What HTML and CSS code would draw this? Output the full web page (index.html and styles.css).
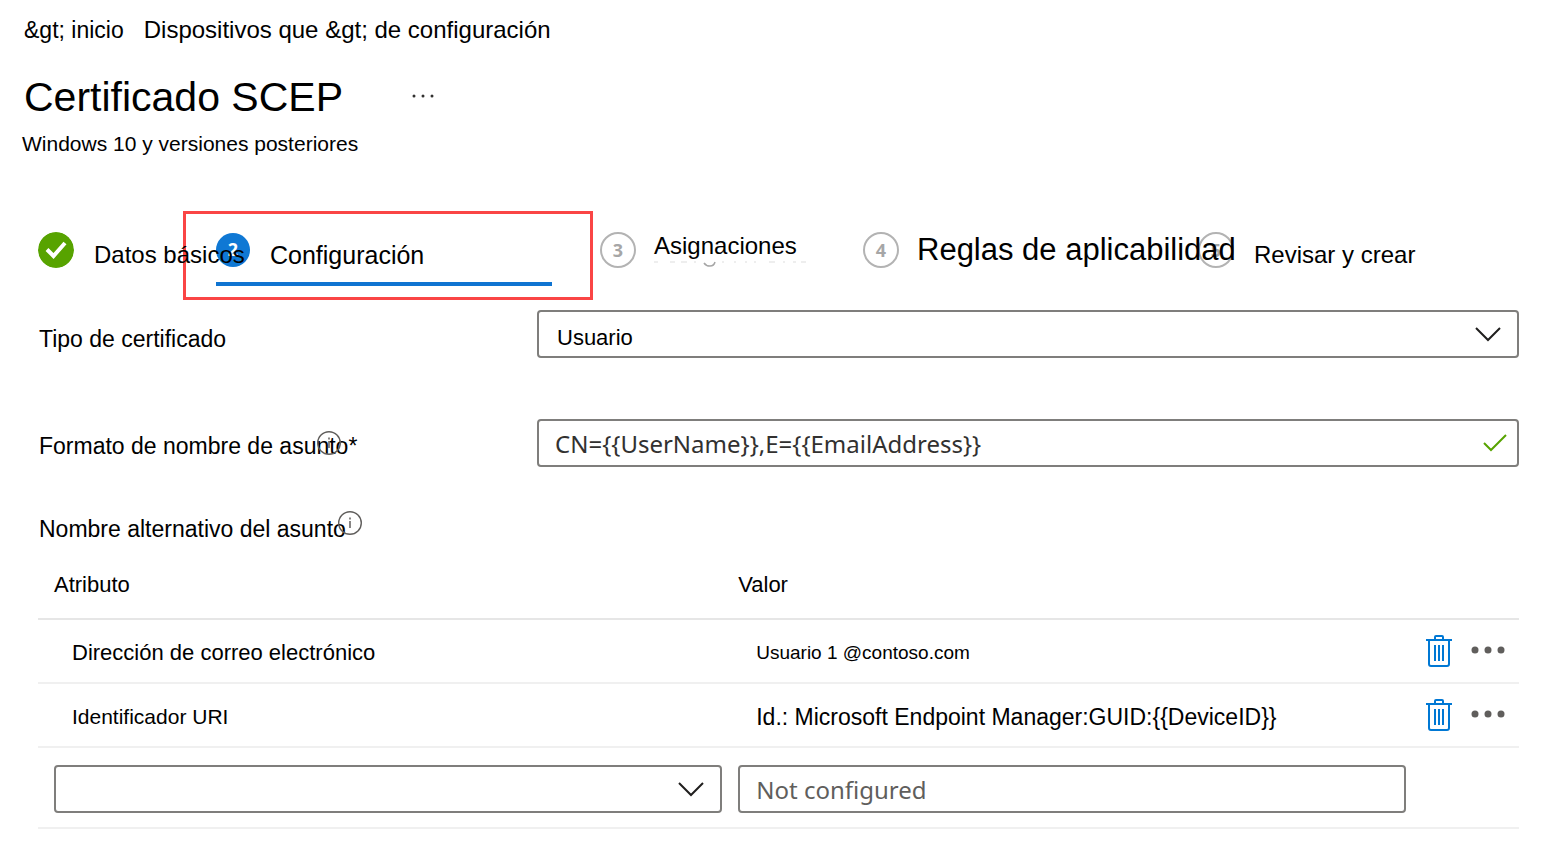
FILE: index.html
```html
<!DOCTYPE html>
<html lang="es">
<head>
<meta charset="utf-8">
<title>Certificado SCEP</title>
<link rel="stylesheet" href="styles.css">
</head>
<body>
<header class="page-header">
  <nav class="breadcrumb" aria-label="Ruta">
    <a class="crumb crumb-home" href="#">&amp;gt; inicio</a>
    <a class="crumb" href="#">Dispositivos que &amp;gt; de configuración</a>
  </nav>
  <div class="title-row">
    <h1 class="title">Certificado SCEP</h1>
    <button class="icon-button more-button" type="button" aria-label="Más opciones">
      <svg width="24" height="6" viewBox="0 0 24 6" fill="#323130"><circle cx="3" cy="3" r="1.5"/><circle cx="12" cy="3" r="1.5"/><circle cx="21" cy="3" r="1.5"/></svg>
    </button>
  </div>
  <p class="subtitle">Windows 10 y versiones posteriores</p>
</header>

<main class="content">
  <ol class="steps">
    <li class="step">
      <svg class="badge" viewBox="0 0 36 36"><circle cx="18" cy="18" r="18" fill="#57a300"/><path d="M9 17.500l6.500 6.500L27 11" fill="none" stroke="#fff" stroke-width="4"/></svg>
      <span class="step-label label-low">Datos básicos</span>
    </li>
    <li class="step step-active" aria-current="step">
      <div class="step-tab">
        <span class="badge badge-current">2</span>
        <span class="step-label label-low label-large">Configuración</span>
      </div>
    </li>
    <li class="step">
      <span class="badge badge-pending">3</span>
      <span class="step-label label-high">Asignaciones
        <svg class="tail" viewBox="0 0 154 8" fill="none" stroke="#a6a6a6"><path d="M50 2Q52 5 56 5Q60 5 61 1" stroke-width="1.500"/><path d="M0 1h4M16 1h5M27 1h6M40 1h2M68 1h2M80 1h2M91 1h2M100 1h2M115 1h6M129 1h2M139 1h3M147 1h5" stroke="#ddd"/></svg>
      </span>
    </li>
    <li class="step">
      <span class="badge badge-pending">4</span>
      <span class="step-label label-rules">Reglas de aplicabilidad</span>
    </li>
    <li class="step">
      <span class="badge badge-pending">5</span>
      <span class="step-label label-low">Revisar y crear</span>
    </li>
  </ol>

  <form class="form">
    <div class="field">
      <label class="field-label field-label-low" for="type">Tipo de certificado</label>
      <div class="control">
        <select class="box" id="type"><option>Usuario</option></select>
        <svg class="chevron" viewBox="0 0 26 15"><path d="M1 1l12 12L25 1" fill="none" stroke="#201f1e" stroke-width="2"/></svg>
      </div>
    </div>
    <div class="field">
      <div class="field-label">
        <label for="subject">Formato de nombre de asunto*</label>
        <svg class="info info-subject" viewBox="0 0 24 24"><circle cx="12" cy="12" r="11.300" fill="none" stroke="#605e5c" stroke-width="1.400"/><path d="M12 10v7M12 6.500v2" stroke="#605e5c" stroke-width="1.500"/></svg>
      </div>
      <div class="control">
        <input class="box box-latin" id="subject" type="text" value="CN={{UserName}},E={{EmailAddress}}">
        <svg class="tick" viewBox="0 0 24 18"><path d="M1 9l7 7L23 1" fill="none" stroke="#57a300" stroke-width="2"/></svg>
      </div>
    </div>

    <h2 class="section-title">Nombre alternativo del asunto<svg class="info info-section" viewBox="0 0 24 24"><circle cx="12" cy="12" r="11.300" fill="none" stroke="#605e5c" stroke-width="1.400"/><path d="M12 10v7M12 6.500v2" stroke="#605e5c" stroke-width="1.500"/></svg></h2>

    <table class="san">
      <thead>
        <tr><th class="col-wide" scope="col">Atributo</th><th class="col-wide" scope="col">Valor</th><td></td></tr>
      </thead>
      <tbody>
        <tr class="san-row">
          <td>Dirección de correo electrónico</td>
          <td class="value-small">Usuario 1 @contoso.com</td>
          <td class="actions-cell"><div class="actions">
            <button class="icon-button" type="button" aria-label="Eliminar"><svg width="26" height="32" viewBox="0 0 26 32" fill="none" stroke="#0078d4" stroke-width="2"><path d="M0 5h26M9 5V2q0-1 1-1h6q1 0 1 1v3M3 5v24q0 2 2 2h16q2 0 2-2V5M9 10v16M13 10v16M17 10v16"/></svg></button>
            <button class="icon-button more-button" type="button" aria-label="Más opciones"><svg width="34" height="8" viewBox="0 0 34 8" fill="#605e5c"><circle cx="4" cy="4" r="3.500"/><circle cx="17" cy="4" r="3.500"/><circle cx="30" cy="4" r="3.500"/></svg></button>
          </div></td>
        </tr>
        <tr class="san-row">
          <td class="attribute-small">Identificador URI</td>
          <td class="value-large">Id.: Microsoft Endpoint Manager:GUID:{{DeviceID}}</td>
          <td class="actions-cell"><div class="actions">
            <button class="icon-button" type="button" aria-label="Eliminar"><svg width="26" height="32" viewBox="0 0 26 32" fill="none" stroke="#0078d4" stroke-width="2"><path d="M0 5h26M9 5V2q0-1 1-1h6q1 0 1 1v3M3 5v24q0 2 2 2h16q2 0 2-2V5M9 10v16M13 10v16M17 10v16"/></svg></button>
            <button class="icon-button more-button" type="button" aria-label="Más opciones"><svg width="34" height="8" viewBox="0 0 34 8" fill="#605e5c"><circle cx="4" cy="4" r="3.500"/><circle cx="17" cy="4" r="3.500"/><circle cx="30" cy="4" r="3.500"/></svg></button>
          </div></td>
        </tr>
        <tr class="new-row">
          <td><div class="control">
            <select class="box" aria-label="Atributo"><option></option></select>
            <svg class="chevron" viewBox="0 0 26 15"><path d="M1 1l12 12L25 1" fill="none" stroke="#201f1e" stroke-width="2"/></svg>
          </div></td>
          <td><input class="box box-latin" type="text" aria-label="Valor" placeholder="Not configured"></td>
          <td></td>
        </tr>
      </tbody>
    </table>
  </form>
</main>
</body>
</html>
```
FILE: styles.css
```css
* {
  box-sizing: border-box;
}

body {
  margin: 0;
  background: #fff;
  color: #000;
  font-family: "Liberation Sans", Arial, sans-serif;
  font-size: 22px;
  line-height: 28px;
}

.page-header {
  padding: 15px 24px 0;
}

.breadcrumb {
  display: flex;
  gap: 20px;
  font-size: 24px;
  line-height: 30px;
}

.crumb {
  color: inherit;
  text-decoration: none;
}

.crumb-home {
  font-size: 23px;
}

.title-row {
  display: flex;
  align-items: center;
  gap: 68px;
  margin-top: 27px;
}

.title {
  margin: 0;
  font-size: 41px;
  font-weight: 400;
  line-height: 50px;
}

.subtitle {
  margin: 8px 0 0 -2px;
  font-size: 21px;
}

.icon-button {
  display: flex;
  padding: 0;
  border: 0;
  background: none;
}

.more-button {
  padding-bottom: 3px;
}

.content {
  padding: 53px 41px 24px 38px;
}

.steps {
  display: grid;
  grid-template-columns: 145fr 417fr 263fr 335fr 321fr;
  margin: 0;
  padding: 0;
  list-style: none;
  white-space: nowrap;
}

.step {
  display: flex;
  align-items: center;
  gap: 18px;
  height: 78px;
  min-width: 0;
}

.step-active {
  height: 89px;
  margin-right: 7px;
  padding: 0 38px 11px 30px;
  border: 3px solid #fa4545;
  align-items: flex-end;
}

.step-tab {
  display: flex;
  align-items: center;
  gap: 20px;
  width: 100%;
  height: 56px;
  padding-bottom: 12px;
  border-bottom: 4px solid #0f74d1;
}

.badge {
  flex: none;
  width: 36px;
  height: 36px;
  border-radius: 50%;
  font: 700 18px/32px "Open Sans", sans-serif;
  text-align: center;
}

.badge-current {
  width: 34px;
  height: 34px;
  background: #0f78d4;
  color: #fff;
}

.badge-pending {
  border: 2px solid #b3b3b3;
  color: #a6a6a6;
}

.step-label {
  position: relative;
  z-index: 1;
  padding-left: 2px;
  font-size: 24px;
  line-height: 30px;
}

.label-low {
  padding-top: 10px;
}

.label-high {
  padding: 0 0 8px;
}

.label-large {
  padding-left: 0;
  font-size: 25px;
}

.label-rules {
  padding-left: 0;
  font-size: 31px;
  line-height: 40px;
}

.tail {
  position: absolute;
  left: 0;
  top: 30px;
  width: 154px;
  height: 8px;
}

.form {
  padding-top: 10px;
}

.field {
  display: grid;
  grid-template-columns: 499fr 982fr;
  align-items: center;
  margin-bottom: 61px;
}

.field + .field {
  margin-bottom: 47px;
}

.field-label {
  position: relative;
  padding: 6px 0 0 1px;
  font-size: 23px;
  line-height: 30px;
}

.field-label-low {
  padding-top: 10px;
}

.info {
  position: absolute;
  width: 24px;
  height: 24px;
}

.info-subject {
  left: 279px;
  top: 6px;
}

.info-section {
  left: 299px;
  top: -3px;
}

.control {
  position: relative;
}

.box {
  display: block;
  width: 100%;
  height: 48px;
  padding: 6px 48px 0 18px;
  border: 2px solid #7f7e7c;
  border-radius: 4px;
  background: #fff;
  color: #000;
  font: 22px "Liberation Sans", Arial, sans-serif;
  appearance: none;
}

.box-latin {
  padding: 0 48px 0 16px;
  color: #323130;
  font: 24px "Noto Sans", "Open Sans", sans-serif;
}

.box::placeholder {
  color: #605e5c;
  opacity: 1;
}

.chevron {
  position: absolute;
  right: 18px;
  top: 17px;
  width: 26px;
  height: 15px;
  pointer-events: none;
}

.tick {
  position: absolute;
  right: 12px;
  top: 15px;
  width: 24px;
  height: 18px;
}

.section-title {
  position: relative;
  margin: 0 1px;
  font-size: 23px;
  font-weight: 400;
  line-height: 30px;
}

.san {
  width: 100%;
  border-spacing: 0;
  table-layout: fixed;
}

.san th,
.san td {
  padding: 0 0 0 16px;
  border-bottom: 2px solid #f0f0f0;
  text-align: left;
}

.san th,
.san thead td {
  height: 76px;
  padding-top: 8px;
  border-color: #e6e6e6;
  font-weight: 400;
}

.col-wide {
  width: 46.2%;
}

.san .san-row td {
  height: 64px;
  padding: 3px 0 0 34px;
}

.san .attribute-small {
  font-size: 21px;
}

.san .value-small {
  font-size: 19px;
}

.san .value-large {
  font-size: 23px;
}

.san .san-row .actions-cell {
  padding: 0 0 0 20px;
}

.actions {
  display: flex;
  align-items: center;
  gap: 19px;
}

.san .new-row td {
  padding-top: 17px;
  padding-bottom: 14px;
}
```
